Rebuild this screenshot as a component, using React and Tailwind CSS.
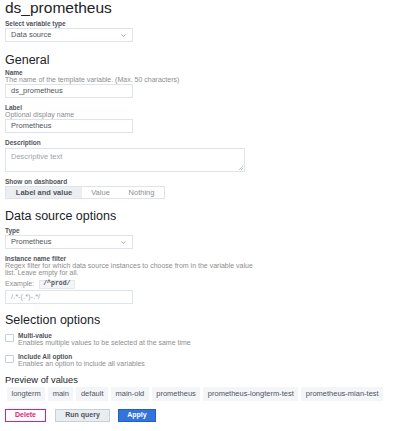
import React from "react";

const Label = ({ children, className = "" }) => (
  <div className={`text-[6.5px] leading-[7px] font-bold text-[#52545c] ${className}`}>
    {children}
  </div>
);

const Desc = ({ children, className = "" }) => (
  <div className={`text-[7px] leading-[7px] text-[#8e8e8e] ${className}`}>
    {children}
  </div>
);

const Heading = ({ children, className = "" }) => (
  <h2 className={`text-[12.5px] leading-[14px] text-[#202226] ${className}`}>
    {children}
  </h2>
);

const Chevron = () => (
  <svg width="5" height="3" viewBox="0 0 5 3" className="mr-[6px]">
    <path d="M0.5 0.5 L2.5 2.5 L4.5 0.5" fill="none" stroke="#8e8e8e" strokeWidth="0.8" />
  </svg>
);

const SelectBox = ({ value, className = "" }) => (
  <div
    className={`w-[128px] h-[14px] border border-[#dde4ed] flex items-center justify-between pl-[5px] text-[7.5px] text-[#52545c] ${className}`}
  >
    <span>{value}</span>
    <Chevron />
  </div>
);

const Input = ({ value, placeholder, className = "" }) => (
  <div
    className={`w-[128px] h-[14px] border border-[#dde4ed] flex items-center pl-[5px] text-[7.5px] ${className}`}
  >
    {value ? (
      <span className="text-[#52545c]">{value}</span>
    ) : (
      <span className="text-[#a0a4aa]">{placeholder}</span>
    )}
  </div>
);

const Checkbox = ({ label, desc, className = "" }) => (
  <div className={`flex ${className}`}>
    <div className="w-[9px] h-[8px] border border-[#c7d0d9] rounded-[1px] mt-[2px] shrink-0" />
    <div className="ml-[4px]">
      <Label>{label}</Label>
      <Desc>{desc}</Desc>
    </div>
  </div>
);

const previews = [
  "longterm",
  "main",
  "default",
  "main-old",
  "prometheus",
  "prometheus-longterm-test",
  "prometheus-mian-test",
];

export default function App() {
  return (
    <div className="w-[404px] h-[431px] overflow-hidden bg-white px-[5px] font-['Liberation_Sans',Arial,sans-serif]">
      <h1 className="text-[15.5px] leading-[16px] text-[#202226]">ds_prometheus</h1>

      <Label className="mt-[4px]">Select variable type</Label>
      <SelectBox value="Data source" className="mt-[1px]" />

      {/* general */}
      <Heading className="mt-[11px]">General</Heading>
      <Label className="mt-[2px]">Name</Label>
      <Desc>The name of the template variable. (Max. 50 characters)</Desc>
      <Input value="ds_prometheus" className="mt-[1px]" />

      <Label className="mt-[6px]">Label</Label>
      <Desc>Optional display name</Desc>
      <Input value="Prometheus" className="mt-[1px]" />

      <Label className="mt-[6px]">Description</Label>
      <div className="relative mt-[2px] w-[240px] h-[24px] border border-[#dde4ed] pl-[5px] pt-[3px] text-[7.5px] leading-[9px] text-[#a0a4aa]">
        Descriptive text
        <svg width="4" height="4" viewBox="0 0 4 4" className="absolute right-[1px] bottom-[1px]">
          <path d="M4 0 L0 4 M4 2 L2 4" stroke="#9fa7b3" strokeWidth="0.6" />
        </svg>
      </div>

      <Label className="mt-[6px]">Show on dashboard</Label>
      <div className="mt-[1px] w-[160px] h-[13px] border border-[#dde4ed] flex text-[7.5px]">
        <div className="w-[76px] bg-[#eceef1] flex items-center justify-center font-bold text-[#52545c]">
          Label and value
        </div>
        <div className="w-[37px] flex items-center justify-center text-[#8e8e8e]">Value</div>
        <div className="flex-1 flex items-center justify-center text-[#8e8e8e]">Nothing</div>
      </div>

      {/* data source options */}
      <Heading className="mt-[10px]">Data source options</Heading>
      <Label className="mt-[4px]">Type</Label>
      <SelectBox value="Prometheus" className="mt-[1px]" />

      <Label className="mt-[6px]">Instance name filter</Label>
      <Desc>
        Regex filter for which data source instances to choose from in the variable value
        <br />
        list. Leave empty for all.
      </Desc>
      <div className="mt-[3px] h-[10px] flex items-center text-[7px] text-[#8e8e8e]">
        <span>Example:</span>
        <span className="ml-[5px] h-[9px] px-[3px] bg-[#f4f5f8] border border-[#e4e7ec] flex items-center text-[6.5px] font-['Liberation_Mono',monospace] font-bold text-[#52545c]">
          /^prod/
        </span>
      </div>
      <Input placeholder="/.*-(.*)-.*/" className="mt-[1px]" />

      {/* selection options */}
      <Heading className="mt-[9px]">Selection options</Heading>
      <Checkbox
        className="mt-[5px]"
        label="Multi-value"
        desc="Enables multiple values to be selected at the same time"
      />
      <Checkbox
        className="mt-[7px]"
        label="Include All option"
        desc="Enables an option to include all variables"
      />

      <div className="mt-[8px] text-[9.3px] leading-[10px] text-[#202226]">Preview of values</div>
      <div className="mt-[2px] ml-[2px] flex gap-[3px]">
        {previews.map((p) => (
          <div
            key={p}
            className="h-[14px] px-[4.5px] bg-[#f4f5f8] flex items-center text-[7.5px] text-[#52545c]"
          >
            {p}
          </div>
        ))}
      </div>

      {/* actions */}
      <div className="mt-[8px] flex">
        <button className="w-[41px] h-[13px] border border-[#e0226e] text-[#e0226e] text-[7px] font-bold flex items-center justify-center">
          Delete
        </button>
        <button className="ml-[9px] w-[55px] h-[13px] bg-[#e9edf2] border border-[#c7d0d9] text-[#52545c] text-[7px] font-bold flex items-center justify-center">
          Run query
        </button>
        <button className="ml-[8px] w-[38px] h-[13px] bg-[#3274d9] border border-[#1f60c4] text-white text-[7px] font-bold flex items-center justify-center">
          Apply
        </button>
      </div>
    </div>
  );
}
